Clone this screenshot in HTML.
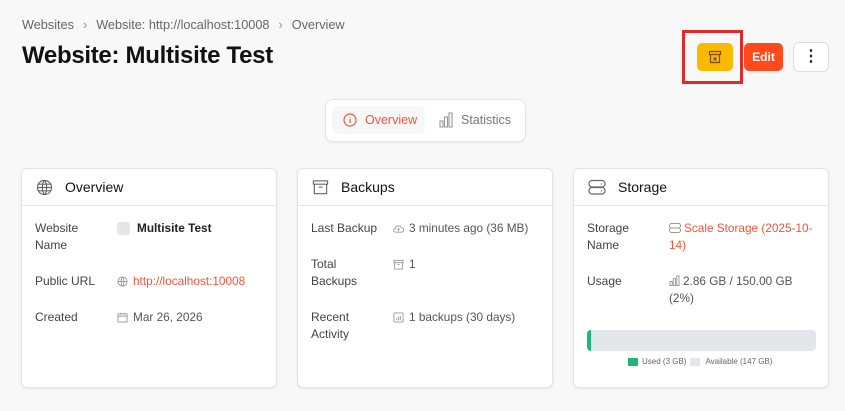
<!DOCTYPE html>
<html><head><meta charset="utf-8"><style>
*{box-sizing:border-box;margin:0;padding:0}
body{width:845px;height:411px;background:#f8f8f8;font-family:"Liberation Sans",sans-serif;position:relative;overflow:hidden;color:#222}
.a{position:absolute}
.bc{left:22px;top:18px;font-size:12.7px;color:#666;white-space:nowrap}
.bc span{margin:0 9px;color:#888}
h1{position:absolute;left:22px;top:42px;font-size:24px;font-weight:bold;color:#111;letter-spacing:-0.3px}
.card{position:absolute;top:168px;width:256px;height:220px;background:#fff;border:1px solid #e4e4e4;border-radius:6px;box-shadow:0 1px 2px rgba(0,0,0,.08)}
.ch{height:37px;border-bottom:1px solid #e6e6e6;display:flex;align-items:center;padding-left:14px;font-size:14px;color:#111}
.ch svg{margin-right:12px}
.lbl{position:absolute;left:13px;font-size:12px;color:#444;line-height:17px}
.val{position:absolute;left:95px;font-size:11.8px;color:#555;line-height:17px;display:flex;align-items:flex-start}
.val svg{margin:3px 5px 0 0;flex:none}
.red{color:#f0553a}
</style></head><body>
<div class="a bc">Websites<span>›</span>Website: http://localhost:10008<span>›</span>Overview</div>
<h1>Website: Multisite Test</h1>

<div class="a" style="left:682px;top:30px;width:61px;height:54px;border:3px solid #e02a2a"></div>
<div class="a" style="left:697px;top:43px;width:36px;height:28px;background:#fbb900;border-radius:5px"></div>
<svg class="a" style="left:708px;top:50px" width="14" height="14" viewBox="0 0 14 14" fill="none" stroke="#7a4a00" stroke-width="1.2"><rect x="1.5" y="1.5" width="11" height="3"/><path d="M2.5 4.5v8h9v-8M5.5 7.5l3 3M8.5 7.5l-3 3"/></svg>
<div class="a" style="left:744px;top:43px;width:39px;height:28px;background:#ff4a1c;border-radius:5px;color:#fff;font-size:12px;font-weight:bold;text-align:center;line-height:28px">Edit</div>
<div class="a" style="left:793px;top:42px;width:36px;height:30px;background:#fff;border:1px solid #ddd;border-radius:6px;text-align:center;line-height:28px;font-size:16px;font-weight:bold">⋮</div>

<div class="a" style="left:325px;top:99px;width:201px;height:43px;background:#fff;border:1px solid #e4e4e4;border-radius:8px;box-shadow:0 1px 2px rgba(0,0,0,.06)"></div>
<div class="a" style="left:332px;top:106px;width:93px;height:28px;background:#f7f7f7;border-radius:6px"></div>
<svg class="a" style="left:343px;top:113px" width="14" height="14" viewBox="0 0 14 14" fill="none" stroke="#f0553a" stroke-width="1.2"><circle cx="7" cy="7" r="6"/><path d="M7 6v4M7 4v.5"/></svg>
<div class="a red" style="left:365px;top:113px;font-size:12.5px">Overview</div>
<svg class="a" style="left:439px;top:112px" width="14" height="16" viewBox="0 0 14 16" fill="none" stroke="#999" stroke-width="1.1"><rect x="1" y="9" width="3" height="6"/><rect x="5.5" y="5" width="3" height="10"/><rect x="10" y="1" width="3" height="14"/></svg>
<div class="a" style="left:461px;top:113px;font-size:12.5px;color:#777">Statistics</div>

<div class="card" style="left:21px">
<div class="ch"><svg width="17" height="17" viewBox="0 0 18 18" fill="none" stroke="#666" stroke-width="1.2"><circle cx="9" cy="9" r="7.5"/><path d="M1.5 9h15M9 1.5c-3 3-3 12 0 15M9 1.5c3 3 3 12 0 15M2.5 5.5h13M2.5 12.5h13"/></svg>Overview</div>
<div class="lbl" style="top:51px">Website<br>Name</div>
<div class="val" style="top:51px"><span style="width:13px;height:13px;background:#e3e6ea;border-radius:3px;margin:2px 7px 0 0"></span><b style="color:#222">Multisite Test</b></div>
<div class="lbl" style="top:104px">Public URL</div>
<div class="val red" style="top:104px"><svg width="11" height="11" viewBox="0 0 12 12" fill="none" stroke="#999"><circle cx="6" cy="6" r="5"/><path d="M1 6h10M6 1c-2 2-2 8 0 10M6 1c2 2 2 8 0 10"/></svg>http://localhost:10008</div>
<div class="lbl" style="top:140px">Created</div>
<div class="val" style="top:140px"><svg width="11" height="11" viewBox="0 0 12 12" fill="none" stroke="#999"><rect x="1" y="2" width="10" height="9"/><path d="M1 4.5h10M4 1v2M8 1v2"/></svg>Mar 26, 2026</div>
</div>

<div class="card" style="left:297px">
<div class="ch"><svg width="17" height="17" viewBox="0 0 18 18" fill="none" stroke="#666" stroke-width="1.2"><rect x="1.5" y="2" width="15" height="3.5"/><path d="M2.5 5.5v10h13v-10M7 8.5h4"/></svg>Backups</div>
<div class="lbl" style="top:51px">Last Backup</div>
<div class="val" style="top:51px"><svg width="11" height="11" viewBox="0 0 12 12" fill="none" stroke="#999"><path d="M3 10h6a2.5 2.5 0 0 0 0-5 3.5 3.5 0 0 0-6.5 1A2 2 0 0 0 3 10zM6 9V6M4.8 7.2 6 6l1.2 1.2"/></svg>3 minutes ago (36 MB)</div>
<div class="lbl" style="top:87px">Total<br>Backups</div>
<div class="val" style="top:87px"><svg width="11" height="11" viewBox="0 0 12 12" fill="none" stroke="#999"><rect x="1" y="1.5" width="10" height="2.5"/><path d="M1.8 4v7h8.4V4M5 6h2"/></svg>1</div>
<div class="lbl" style="top:140px">Recent<br>Activity</div>
<div class="val" style="top:140px"><svg width="11" height="11" viewBox="0 0 12 12" fill="none" stroke="#999"><rect x="1" y="1" width="10" height="10" rx="1"/><path d="M4 9V7M6 9V5M8 9V4"/></svg>1 backups (30 days)</div>
</div>

<div class="card" style="left:573px">
<div class="ch"><svg width="18" height="17" viewBox="0 0 18 17" fill="none" stroke="#666" stroke-width="1.2"><rect x="1" y="1.5" width="16" height="6.5" rx="3"/><rect x="1" y="8.5" width="16" height="6.5" rx="3"/><path d="M13 5h1M13 12h1"/></svg>Storage</div>
<div class="lbl" style="top:51px">Storage<br>Name</div>
<div class="val red" style="top:51px;width:148px;display:block"><svg width="12" height="10" viewBox="0 0 12 10" fill="none" stroke="#999" style="margin:0 3px -1px 0"><rect x="0.5" y="0.5" width="11" height="4.5" rx="2"/><rect x="0.5" y="5" width="11" height="4.5" rx="2"/></svg>Scale Storage (2025-10-14)</div>
<div class="lbl" style="top:104px">Usage</div>
<div class="val" style="top:104px;width:140px;display:block"><svg width="11" height="11" viewBox="0 0 12 12" fill="none" stroke="#999" style="margin:0 3px -1px 0"><rect x="1" y="7" width="2.5" height="4.5"/><rect x="4.7" y="4" width="2.5" height="7.5"/><rect x="8.4" y="1" width="2.5" height="10.5"/></svg>2.86 GB / 150.00 GB (2%)</div>
<div class="a" style="left:13px;top:161px;width:229px;height:21px;background:#e3e6ea;border-radius:4px;overflow:hidden"><div style="width:4px;height:100%;background:#1fb67a"></div></div>
<div class="a" style="left:54px;top:188px;font-size:8px;color:#666;display:flex;align-items:center;white-space:nowrap"><span style="width:10px;height:8px;background:#1fb67a;margin-right:4px"></span>Used (3 GB)<span style="width:10px;height:8px;background:#e3e6ea;margin:0 5px 0 4px"></span>Available (147 GB)</div>
</div>
</body></html>
